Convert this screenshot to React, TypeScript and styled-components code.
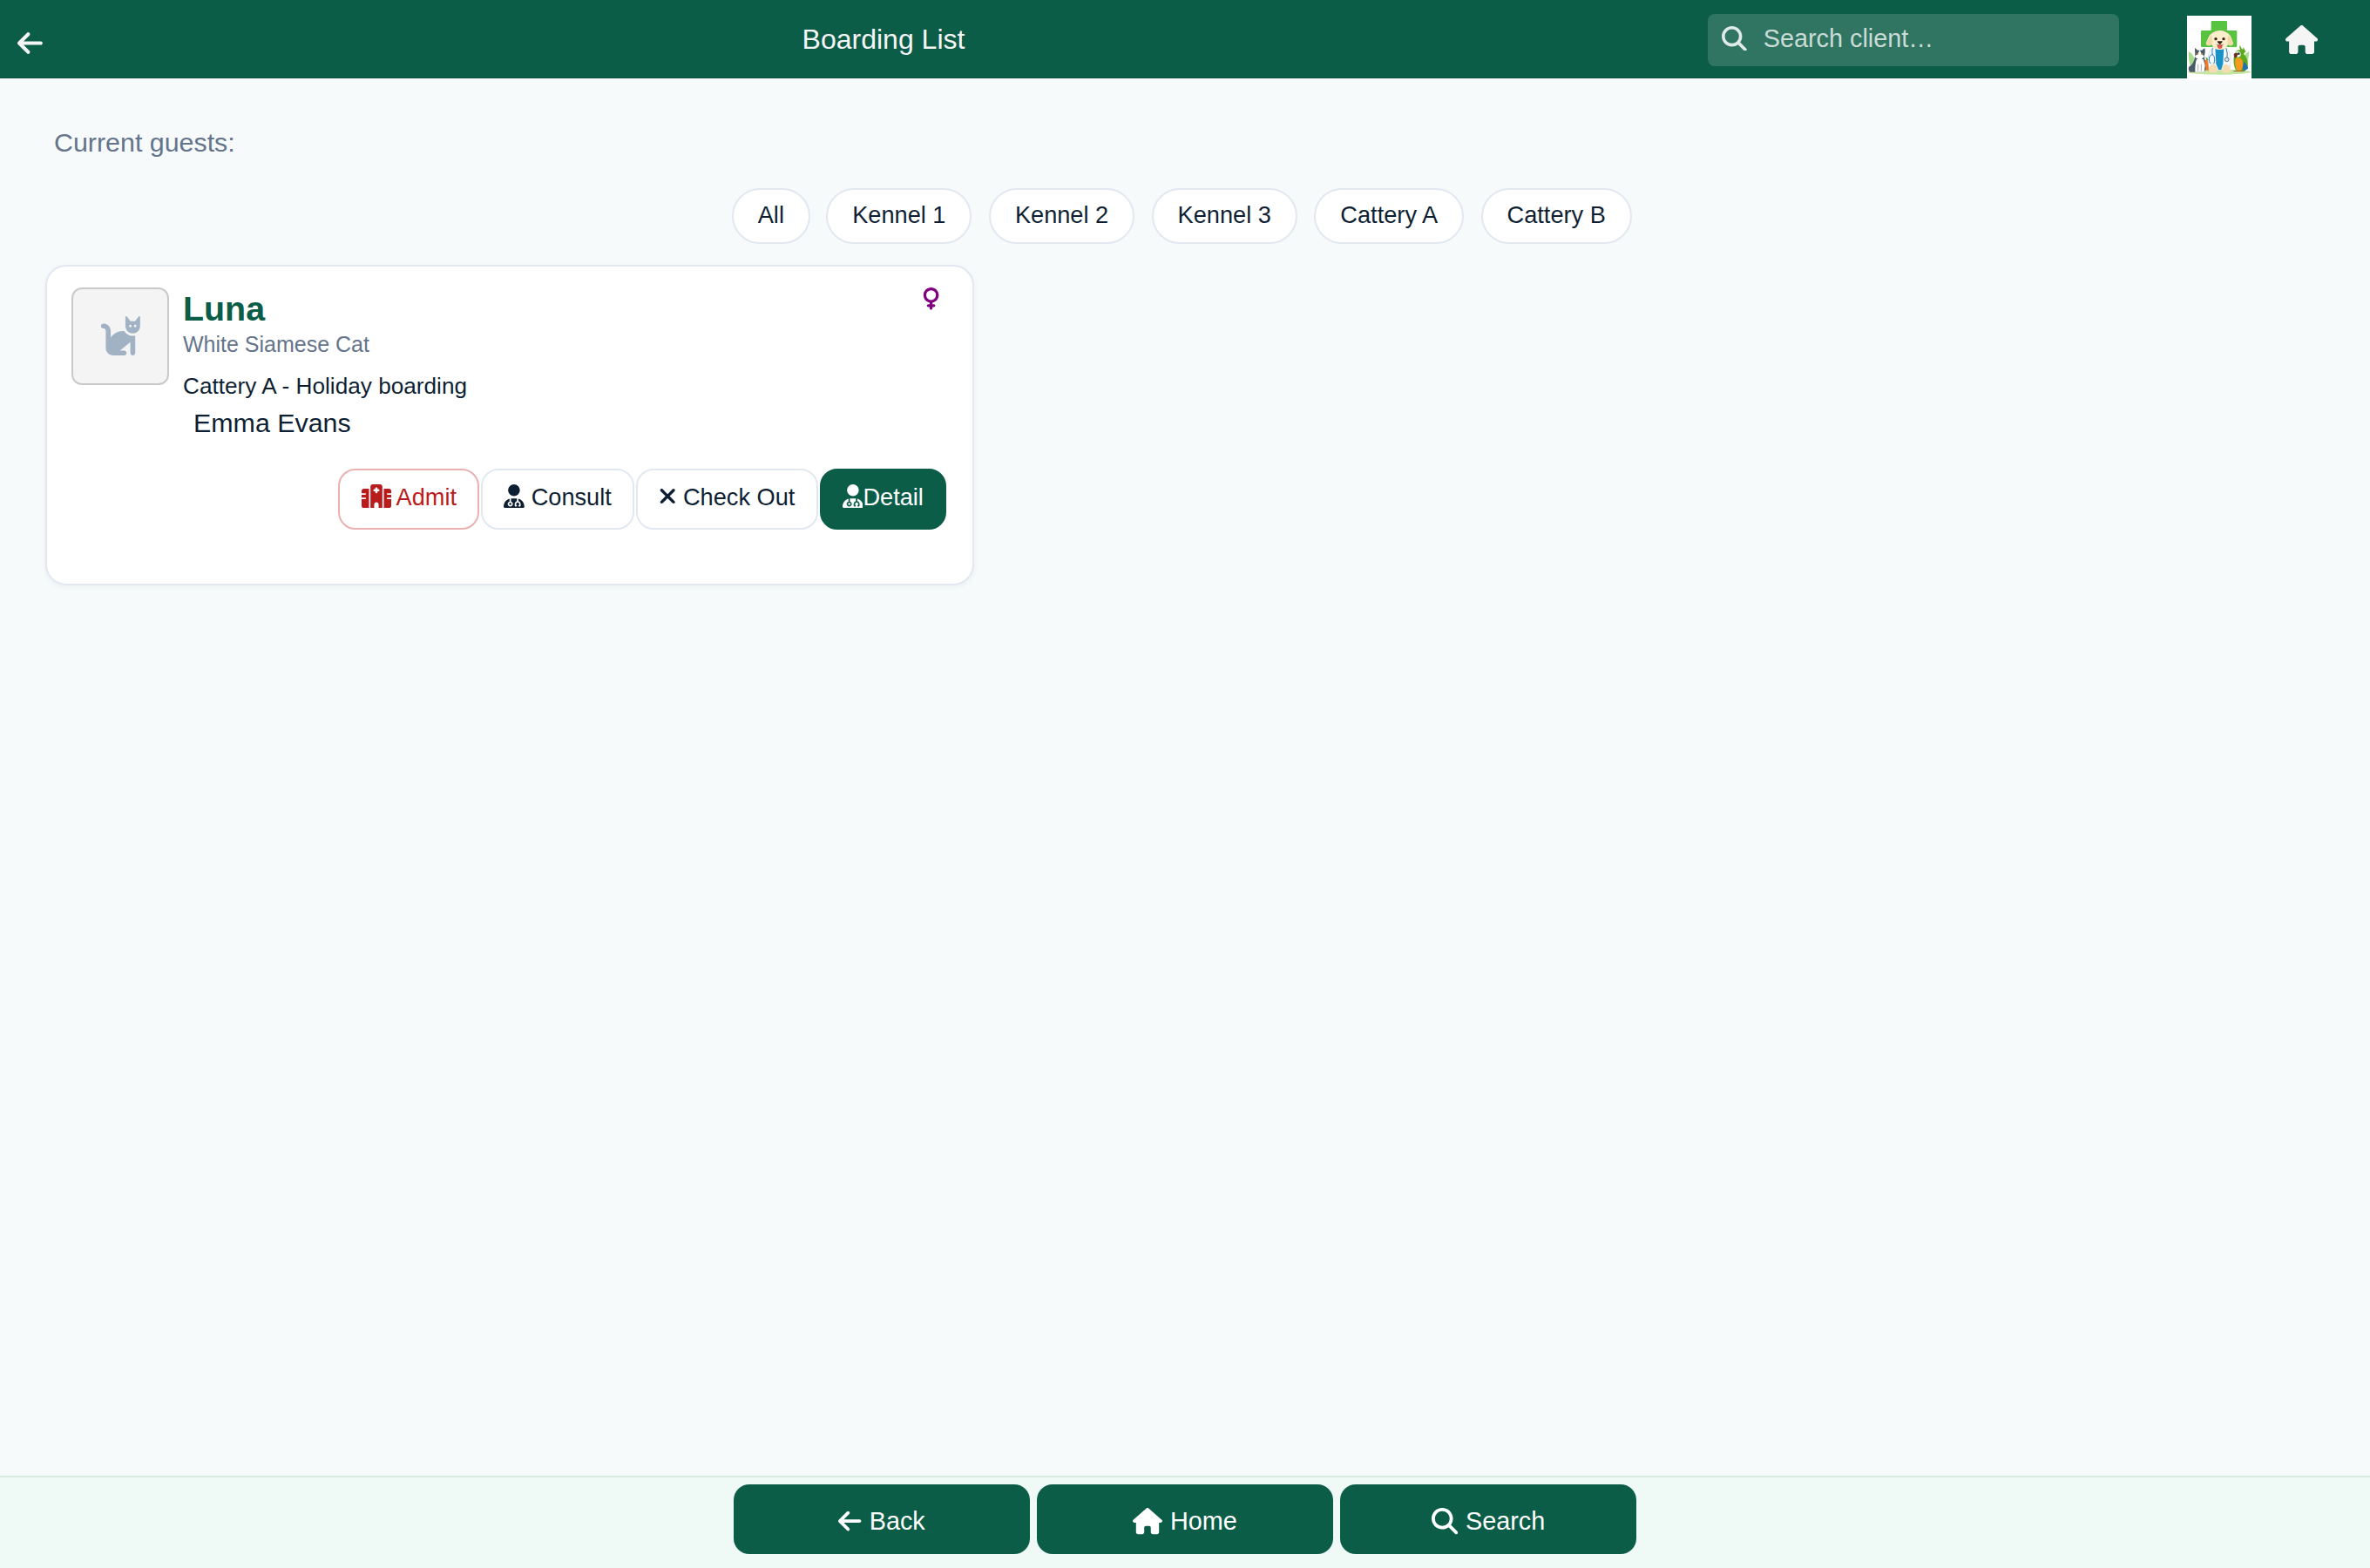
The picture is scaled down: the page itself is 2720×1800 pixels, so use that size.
import React from "react";
import styled, { createGlobalStyle, css } from "styled-components";
import {
  FaArrowLeft,
  FaCat,
  FaHospital,
  FaHouse,
  FaMagnifyingGlass,
  FaUserDoctor,
  FaVenus,
  FaXmark,
} from "react-icons/fa6";

const green = "#0b5d47";
const ink = "#0f1f33";
const muted = "#64748b";
const line = "#e2e8f0";

const GlobalStyle = createGlobalStyle`
  * { box-sizing: border-box; }
  body {
    margin: 0;
    background: #f6fafb;
    color: ${ink};
    font-family: "Liberation Sans", Arial, Helvetica, sans-serif;
  }
  button { font-family: inherit; }
`;

// Glyph widths in 1/512 em, so that each icon keeps its own proportions.
const glyphs = {
  arrow: { Glyph: FaArrowLeft, width: 448 },
  cat: { Glyph: FaCat, width: 576 },
  hospital: { Glyph: FaHospital, width: 640 },
  house: { Glyph: FaHouse, width: 576 },
  search: { Glyph: FaMagnifyingGlass, width: 512 },
  doctor: { Glyph: FaUserDoctor, width: 448 },
  venus: { Glyph: FaVenus, width: 384 },
  close: { Glyph: FaXmark, width: 384 },
};

const IconBox = styled.span<{ $width: number }>`
  svg {
    width: ${({ $width }) => $width / 512}em;
    height: 1em;
    vertical-align: -0.125em;
  }
`;

function Icon({ name }: { name: keyof typeof glyphs }) {
  const { Glyph, width } = glyphs[name];
  return (
    <IconBox $width={width}>
      <Glyph />
    </IconBox>
  );
}

const Page = styled.div`
  display: flex;
  flex-direction: column;
  height: 1800px;
`;

const Header = styled.header`
  display: flex;
  flex: none;
  height: 90px;
  background: ${green};
  color: #f5f5f5;
  box-shadow: inset 0 -1px 0 rgba(0, 0, 0, 0.12);
`;

const BackLink = styled.a`
  display: flex;
  width: 68px;
  padding: 33px 0 0 20px;
  font-size: 33px;
  line-height: 0;

  svg {
    display: block;
  }
`;

const Title = styled.h1`
  flex: 1;
  margin: 0;
  padding-top: 26px;
  font-size: 32px;
  font-weight: 400;
  line-height: 38px;
  text-align: center;
`;

const SearchBox = styled.div`
  display: flex;
  align-items: center;
  width: 472px;
  height: 60px;
  margin-top: 16px;
  padding: 0 0 4px 16px;
  gap: 19px;
  border-radius: 8px;
  background: rgba(255, 255, 255, 0.15);
  color: rgba(255, 255, 255, 0.75);
  font-size: 28.8px;

  svg {
    display: block;
    color: rgba(255, 255, 255, 0.85);
  }
`;

const Logo = styled.svg`
  flex: none;
  width: 74px;
  height: 74px;
  margin: 18px 0 0 78px;
  background: #fff;
`;

const HomeLink = styled.a`
  display: flex;
  width: 136px;
  padding: 29px 0 0 39px;
  font-size: 33px;
  line-height: 0;

  svg {
    display: block;
  }
`;

const Main = styled.main`
  flex: 1;
`;

const SectionLabel = styled.p`
  margin: 0;
  padding: 55px 0 0 62px;
  color: ${muted};
  font-size: 30.4px;
  line-height: 36px;
`;

const Chips = styled.div`
  display: flex;
  justify-content: center;
  gap: 19.4px;
  margin-top: 35px;
  padding-right: 7.4px;
`;

const Chip = styled.button`
  height: 64px;
  padding: 0 28px 3px;
  border: 2px solid ${line};
  border-radius: 32px;
  background: #fff;
  color: ${ink};
  font-size: 27.2px;
  line-height: 31px;

  &:first-child {
    margin-right: -1.2px;
  }
`;

const Card = styled.article`
  display: flex;
  flex-direction: column;
  width: 1066px;
  height: 368px;
  margin: 24px 0 0 52px;
  padding: 24px 30px 0 28px;
  border: 2px solid ${line};
  border-radius: 24px;
  background: #fff;
  box-shadow: 0 2px 6px rgba(15, 31, 51, 0.05);
`;

const CardTop = styled.div`
  display: flex;
  height: 208px;
`;

const Avatar = styled.div`
  display: flex;
  align-items: center;
  justify-content: center;
  flex: none;
  width: 112px;
  height: 112px;
  padding-bottom: 1px;
  border: 2px solid #c9c9c9;
  border-radius: 12px;
  background: #f4f4f4;
  color: #a0b2c4;
  font-size: 45px;

  svg {
    display: block;
  }
`;

const Info = styled.div`
  flex: 1;
  padding-left: 16px;
`;

const Name = styled.h2`
  margin: 0;
  color: ${green};
  font-size: 39.4px;
  line-height: 48px;
`;

const Breed = styled.div`
  margin-top: 2px;
  color: ${muted};
  font-size: 25px;
  line-height: 30px;
`;

const Stay = styled.div`
  margin-top: 17px;
  font-size: 26.2px;
  line-height: 32px;
`;

const Owner = styled.div`
  margin-top: 8px;
  padding-left: 12px;
  font-size: 30.4px;
  line-height: 36px;
`;

const Sex = styled.div`
  padding-right: 8px;
  color: #800080;
  font-size: 25.6px;

  svg {
    display: block;
  }
`;

const Actions = styled.div`
  display: flex;
  justify-content: flex-end;
  gap: 2px;
`;

type Tone = "plain" | "danger" | "solid";

const tones = {
  plain: css`
    border-color: ${line};
    background: #fff;
    color: ${ink};
  `,
  danger: css`
    border-color: #ebb1b1;
    background: #fff;
    color: #b91c1c;
  `,
  solid: css`
    border-color: ${green};
    background: ${green};
    color: #fff;
  `,
};

const Action = styled.button<{ $tone: Tone }>`
  height: 70px;
  padding: 0 24.1px 5px;
  border: 2px solid;
  border-radius: 20px;
  font-size: 27.2px;
  line-height: 31px;
  white-space: pre;
  ${({ $tone }) => tones[$tone]}
`;

const Footer = styled.footer`
  display: flex;
  justify-content: center;
  flex: none;
  gap: 8px;
  height: 106px;
  padding-top: 8px;
  border-top: 2px solid #d7ebe1;
  background: #effaf6;
`;

const NavButton = styled.button`
  display: flex;
  align-items: center;
  justify-content: center;
  gap: 9px;
  width: 340px;
  height: 80px;
  padding: 5px 0 0;
  border: 0;
  border-radius: 18px;
  background: ${green};
  color: #fff;
  font-size: 28.8px;
  line-height: 34px;

  svg {
    display: block;
    font-size: 30.2px;
  }
`;

const NavText = styled.span`
  margin-top: -2px;
`;

function ClinicLogo() {
  return (
    <Logo viewBox="0 0 222 222">
      <path fill="#58c241" d="M87 18h47q4 0 4 4v29h30q4 0 4 4v49q0 4-4 4H52q-4 0-4-4V55q0-4 4-4h31V22q0-4 4-4z" />
      <path fill="#a9dc8f" d="M6 124c10 4 20 18 24 34l-6 30-8-2C6 160 4 140 6 124zM213 124c-12 4-20 18-20 36l6 22c10-10 14-40 14-58z" />
      <ellipse cx="111" cy="194" rx="109" ry="9" fill="#c5e6a0" />
      <path fill="#f2791d" d="M60 152h24v36H64q-4-18-4-36z" />
      <path fill="#58a83c" d="M66 152l-2-10 7 6 4-9 3 10-6 5z" />
      <path fill="#f4f7fb" stroke="#c3ccd8" strokeWidth="1.5" d="M90 110c-14 8-18 24-18 44l4 34h70l5-34c0-22-6-38-20-44z" />
      <path fill="#1793c9" d="M97 106h30l-3 60-6 20h-10l-8-20z" />
      <path fill="#f6ddb0" d="M76 184q2-16 14-16t14 16v10q-14 5-28 0zM121 184q2-16 14-16t14 16v10q-14 5-28 0z" />
      <path fill="#fdeecb" d="M113 51c-14 0-22 6-28 10-10 6-14 22-20 34 2 10 14 10 20 4 6 12 14 18 28 18s22-6 28-18c6 6 16 6 18-4-4-12-8-28-18-34-6-4-14-10-28-10z" />
      <path fill="#f3d8a8" d="M84 66c-8 8-12 20-19 29 2 10 14 10 20 4 3-10 1-20-1-33zM142 66c8 8 12 20 17 29-2 10-12 10-18 4-3-10-1-20 1-33z" />
      <circle cx="99" cy="80" r="5" fill="#3a2418" />
      <circle cx="126" cy="80" r="5" fill="#3a2418" />
      <path fill="#36221b" d="M104 88h18q0 7-9 11-9-4-9-11z" />
      <path fill="#e0584f" d="M104 102q9-4 18 0 0 12-9 12t-9-12z" />
      <path fill="none" stroke="#3a2418" strokeWidth="1.5" d="M101 99q7 5 12-1 5 6 12 1" />
      <path fill="none" stroke="#2f78a3" strokeWidth="3" strokeLinecap="round" d="M88 113c-2 10-2 14 0 21M81 165c-8-6-7-29 5-31 11 2 11 24 6 31M135 113q6 16 3 32" />
      <circle cx="137" cy="151" r="7" fill="#d7e1e8" stroke="#54788f" strokeWidth="3" />
      <path fill="#4c5b69" d="M27 111l10 8h14l10-8q3 18-2 28l6 46-7 9H10q-9-10-2-19 14-6 20-34z" />
      <path fill="#fff" d="M44 118l6 14 9 7q-4 12-15 12-13-1-17-12l10-7zM33 150h23l6 20-3 24H28q-1-27 5-44z" />
      <path fill="none" stroke="#4c5b69" strokeWidth="1.5" d="M38 167v24M49 167v24" />
      <circle cx="36" cy="132" r="3" fill="#b98a35" />
      <circle cx="52" cy="132" r="3" fill="#b98a35" />
      <path fill="#5baa20" d="M162 138c1-12 10-20 22-20-4-5-4-12-1-17q3 13 10 15-1-5 2-7 3 12 9 14-6 2-9 9c12 10 16 30 14 46l-12 14-26-2c-11-12-12-36-9-52z" />
      <path fill="#226fb0" d="M196 158q12 10 14 24l-12 8-8-8z" />
      <path fill="#f59a1c" d="M168 146c18-6 28 8 24 28-1 10-8 18-16 18-8-6-14-30-8-46z" />
      <circle cx="175" cy="133" r="10" fill="#fff" />
      <circle cx="178" cy="131" r="4" fill="#26322b" />
      <path fill="#6b3323" d="M161 132q9-9 14-1 0 9-9 15-6-5-5-14z" />
      <path stroke="#925d25" strokeWidth="3" d="M160 191h36" />
    </Logo>
  );
}

const units = ["All", "Kennel 1", "Kennel 2", "Kennel 3", "Cattery A", "Cattery B"];

export default function App() {
  return (
    <>
      <GlobalStyle />
      <Page>
        <Header>
          <BackLink>
            <Icon name="arrow" />
          </BackLink>
          <Title>Boarding List</Title>
          <SearchBox>
            <Icon name="search" />
            <span>Search client…</span>
          </SearchBox>
          <ClinicLogo />
          <HomeLink>
            <Icon name="house" />
          </HomeLink>
        </Header>
        <Main>
          <SectionLabel>Current guests:</SectionLabel>
          <Chips>
            {units.map((unit) => (
              <Chip key={unit}>{unit}</Chip>
            ))}
          </Chips>
          <Card>
            <CardTop>
              <Avatar>
                <Icon name="cat" />
              </Avatar>
              <Info>
                <Name>Luna</Name>
                <Breed>White Siamese Cat</Breed>
                <Stay>Cattery A - Holiday boarding</Stay>
                <Owner>Emma Evans</Owner>
              </Info>
              <Sex>
                <Icon name="venus" />
              </Sex>
            </CardTop>
            <Actions>
              <Action $tone="danger">
                <Icon name="hospital" /> Admit
              </Action>
              <Action $tone="plain">
                <Icon name="doctor" /> Consult
              </Action>
              <Action $tone="plain">
                <Icon name="close" /> Check Out
              </Action>
              <Action $tone="solid">
                <Icon name="doctor" />
                Detail
              </Action>
            </Actions>
          </Card>
        </Main>
        <Footer>
          <NavButton>
            <Icon name="arrow" />
            <NavText>Back</NavText>
          </NavButton>
          <NavButton>
            <Icon name="house" />
            <NavText>Home</NavText>
          </NavButton>
          <NavButton>
            <Icon name="search" />
            <NavText>Search</NavText>
          </NavButton>
        </Footer>
      </Page>
    </>
  );
}
